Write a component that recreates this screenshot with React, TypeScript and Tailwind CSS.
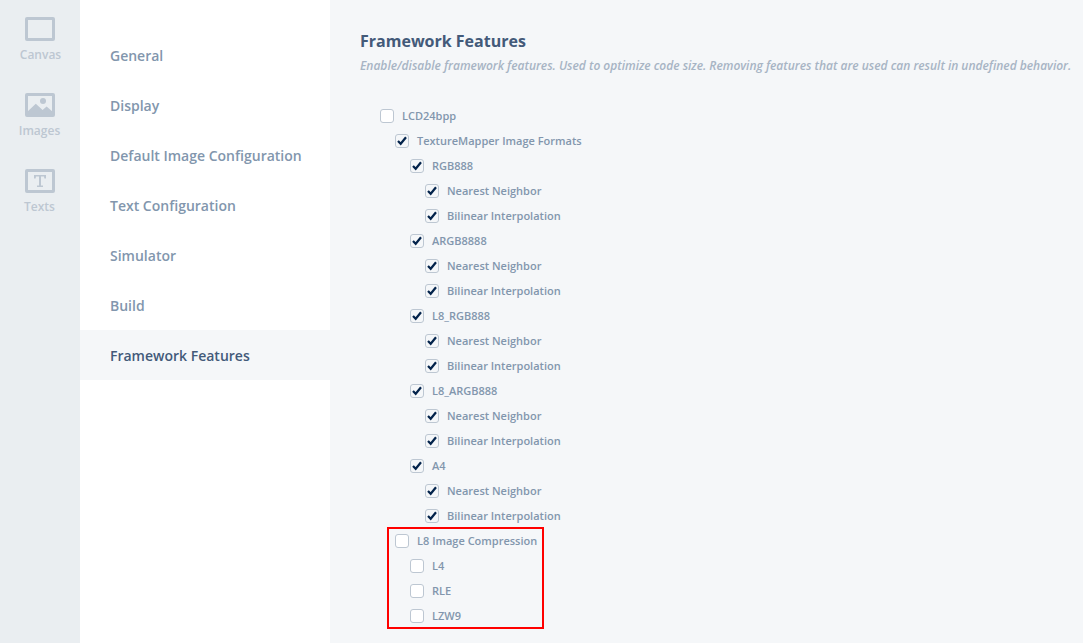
import type { ReactNode } from "react";

const navItems = [
  "General",
  "Display",
  "Default Image Configuration",
  "Text Configuration",
  "Simulator",
  "Build",
  "Framework Features",
];

const formats = ["RGB888", "ARGB8888", "L8_RGB888", "L8_ARGB888", "A4"];

function CanvasIcon() {
  return (
    <svg width="30" height="24" viewBox="0 0 30 24" fill="none">
      <rect x="1.5" y="1.5" width="27" height="21" rx="0.5" stroke="#bdc7d2" strokeWidth="3" />
    </svg>
  );
}

function ImagesIcon() {
  return (
    <svg width="30" height="24" viewBox="0 0 30 24" fill="none">
      <rect x="1.5" y="1.5" width="27" height="21" rx="0.5" stroke="#bdc7d2" strokeWidth="3" />
      <circle cx="18" cy="8" r="3" fill="#bdc7d2" />
      <path d="M2 19L10.8 10.8L17.6 17L21.6 13.6L28 19V22H2Z" fill="#bdc7d2" />
    </svg>
  );
}

function TextsIcon() {
  return (
    <svg width="30" height="24" viewBox="0 0 30 24" fill="none">
      <rect x="1.5" y="1.5" width="27" height="21" rx="0.5" stroke="#bdc7d2" strokeWidth="3" />
      <path d="M9 6H21V9.6H19.4L19 7.6H16V16.6H18V18H12V16.6H14V7.6H11L10.6 9.6H9Z" fill="#bdc7d2" />
    </svg>
  );
}

function RailItem({ icon, label }: { icon: ReactNode; label: string }) {
  return (
    <a className="flex h-[76px] w-20 flex-col items-center">
      {icon}
      <span className={label === "Canvas" ? "mt-1 pl-px text-[12px] leading-5 font-semibold text-[#bdc7d2]" : "mt-1 pr-px text-[12px] leading-5 font-semibold text-[#bdc7d2]"}>
        {label}
      </span>
    </a>
  );
}

function Feature({
  label,
  checked = false,
  children,
}: {
  label: string;
  checked?: boolean;
  children?: ReactNode;
}) {
  return (
    <li>
      <div className="flex h-[25px] items-center gap-2">
        <span
          className={
            checked
              ? "flex size-3.5 shrink-0 items-center justify-center rounded-[3px] border border-[#bdc7d2] bg-[#f5f7f9]"
              : "flex size-3.5 shrink-0 rounded-[3px] border border-[#bdc7d2] bg-white"
          }
        >
          {checked && (
            <svg width="12" height="12" viewBox="0 0 12 12" fill="none" className="shrink-0">
              <path d="M2 6L4.7 8.8L10 2.3" stroke="#03234b" strokeWidth="2.2" />
            </svg>
          )}
        </span>
        <span className="text-[11px] leading-[15px] font-semibold whitespace-nowrap text-[#8296ad]">{label}</span>
      </div>
      {children && <ul className="pl-[15px]">{children}</ul>}
    </li>
  );
}

export default function App() {
  return (
    <div className="flex h-[643px] w-[1083px] overflow-hidden bg-[#f5f7f9] font-['Open_Sans',sans-serif]">
      <aside className="flex w-20 shrink-0 flex-col bg-[#eaeef1] pt-[17px]">
        <RailItem icon={<CanvasIcon />} label="Canvas" />
        <RailItem icon={<ImagesIcon />} label="Images" />
        <RailItem icon={<TextsIcon />} label="Texts" />
      </aside>
      <nav className="w-[250px] shrink-0 bg-white pt-[30px]">
        {navItems.map((item) => (
          <a
            key={item}
            className={
              item === "Framework Features"
                ? "flex h-[50px] items-center bg-[#f5f7f9] pt-0.5 pl-[30px] text-sm font-semibold text-[#435a79]"
                : "flex h-[50px] items-center pt-0.5 pl-[30px] text-sm font-semibold text-[#8296ad]"
            }
          >
            {item}
          </a>
        ))}
      </nav>
      <main className="flex-1 pt-[29px] pl-[30px]">
        <h1 className="text-base leading-6 font-bold text-[#435a79]">Framework Features</h1>
        <p className="mt-[5px] text-[12px] leading-4 font-semibold tracking-[-0.013px] whitespace-nowrap text-[#a7b4c4] italic">
          Enable/disable framework features. Used to optimize code size. Removing features that are used can result in
          undefined behavior.
        </p>
        <ul className="mt-[29px] pl-5">
          <Feature label="LCD24bpp">
            <Feature label="TextureMapper Image Formats" checked>
              {formats.map((format) => (
                <Feature key={format} label={format} checked>
                  <Feature label="Nearest Neighbor" checked />
                  <Feature label="Bilinear Interpolation" checked />
                </Feature>
              ))}
            </Feature>
            <li className="relative">
              <ul>
                <Feature label="L8 Image Compression">
                  <Feature label="L4" />
                  <Feature label="RLE" />
                  <Feature label="LZW9" />
                </Feature>
              </ul>
              <div className="pointer-events-none absolute -top-px -left-2 h-[102px] w-[157px] border-2 border-[#ff0000]" />
            </li>
          </Feature>
        </ul>
      </main>
    </div>
  );
}
